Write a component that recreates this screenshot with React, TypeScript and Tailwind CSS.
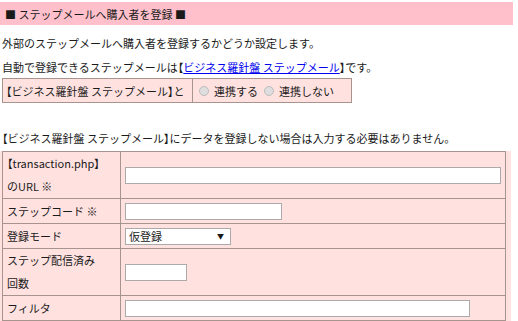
import React from 'react';

const jp = { fontFamily: '"Noto Sans CJK JP", "Noto Sans", sans-serif' };

// 括弧だけ詰める
function K({ children }: { children: React.ReactNode }) {
  return <span className="[font-feature-settings:'palt']">{children}</span>;
}

function Radio({ label }: { label: string }) {
  return (
    <span className="inline-flex items-center">
      <span className="inline-block w-[10px] h-[10px] rounded-full border border-[#bcbcbc] bg-[#dedede] mr-[5px]" />
      {label}
    </span>
  );
}

function Field({ w }: { w: string }) {
  return <div className={`h-[17px] border border-[#aaa] bg-white ${w}`} />;
}

export default function App() {
  return (
    <div className="w-[518px] h-[321px] overflow-hidden bg-white text-[11px] leading-[16px] text-[#1a1a1a] whitespace-nowrap" style={jp}>
      {/* 見出し */}
      <div className="mt-[2px] w-[513px] h-[23px] bg-[#ffc0cb] pl-[5px] flex items-center">
        ■ ステップメールへ購入者を登録 ■
      </div>

      <div className="mt-[7px] h-[22px] pl-[2px] flex items-center">
        外部のステップメールへ購入者を登録するかどうか設定します。
      </div>
      <div className="mt-[2px] h-[22px] pl-[2px] flex items-center">
        自動で登録できるステップメールは<K>【</K>
        <a href="#" className="text-[#0000ee] underline">ビジネス羅針盤 ステップメール</a>
        <K>】</K>です。
      </div>

      {/* 連携設定 */}
      <table className="ml-[2px] w-[350px] border-collapse bg-[#ffe2e0]">
        <tbody>
          <tr className="h-[24px]">
            <td className="w-[190px] border border-[#a8948f] pl-[3px]">
              <K>【</K>ビジネス羅針盤 ステップメール<K>】</K>と
            </td>
            <td className="border border-[#a8948f] pl-[6px]">
              <div className="flex items-center gap-[6px]">
                <Radio label="連携する" />
                <Radio label="連携しない" />
              </div>
            </td>
          </tr>
        </tbody>
      </table>

      <div className="mt-[24px] h-[22px] pl-[2px] flex items-center">
        <K>【</K>ビジネス羅針盤 ステップメール<K>】</K>にデータを登録しない場合は入力する必要はありません。
      </div>

      {/* 入力項目 */}
      <div className="mt-[2px] w-[511px] bg-[#ffe2e0]">
        <table className="ml-[2px] w-[504px] border-collapse">
          <tbody>
            <tr className="h-[46px]">
              <td className="w-[118px] border border-[#a8948f] pl-[4px] leading-[23px]">
                <K>【</K>transaction.php<K>】</K><br />のURL ※
              </td>
              <td className="border border-[#a8948f] pl-[4px]"><Field w="w-[376px]" /></td>
            </tr>
            <tr className="h-[25px]">
              <td className="border border-[#a8948f] pl-[4px]">ステップコード ※</td>
              <td className="border border-[#a8948f] pl-[4px]"><Field w="w-[157px]" /></td>
            </tr>
            <tr className="h-[25px]">
              <td className="border border-[#a8948f] pl-[4px]">登録モード</td>
              <td className="border border-[#a8948f] pl-[4px]">
                <div className="w-[106px] h-[17px] border border-[#aaa] bg-white flex items-center justify-between pl-[3px] pr-[6px] leading-none">
                  <span>仮登録</span>
                  <span className="text-[7px]">▼</span>
                </div>
              </td>
            </tr>
            <tr className="h-[47px]">
              <td className="border border-[#a8948f] pl-[4px] leading-[23px]">
                ステップ配信済み<br />回数
              </td>
              <td className="border border-[#a8948f] pl-[4px]"><Field w="w-[62px]" /></td>
            </tr>
            <tr className="h-[25px]">
              <td className="border border-[#a8948f] pl-[4px]">フィルタ</td>
              <td className="border border-[#a8948f] pl-[4px]"><Field w="w-[345px]" /></td>
            </tr>
          </tbody>
        </table>
      </div>
    </div>
  );
}
